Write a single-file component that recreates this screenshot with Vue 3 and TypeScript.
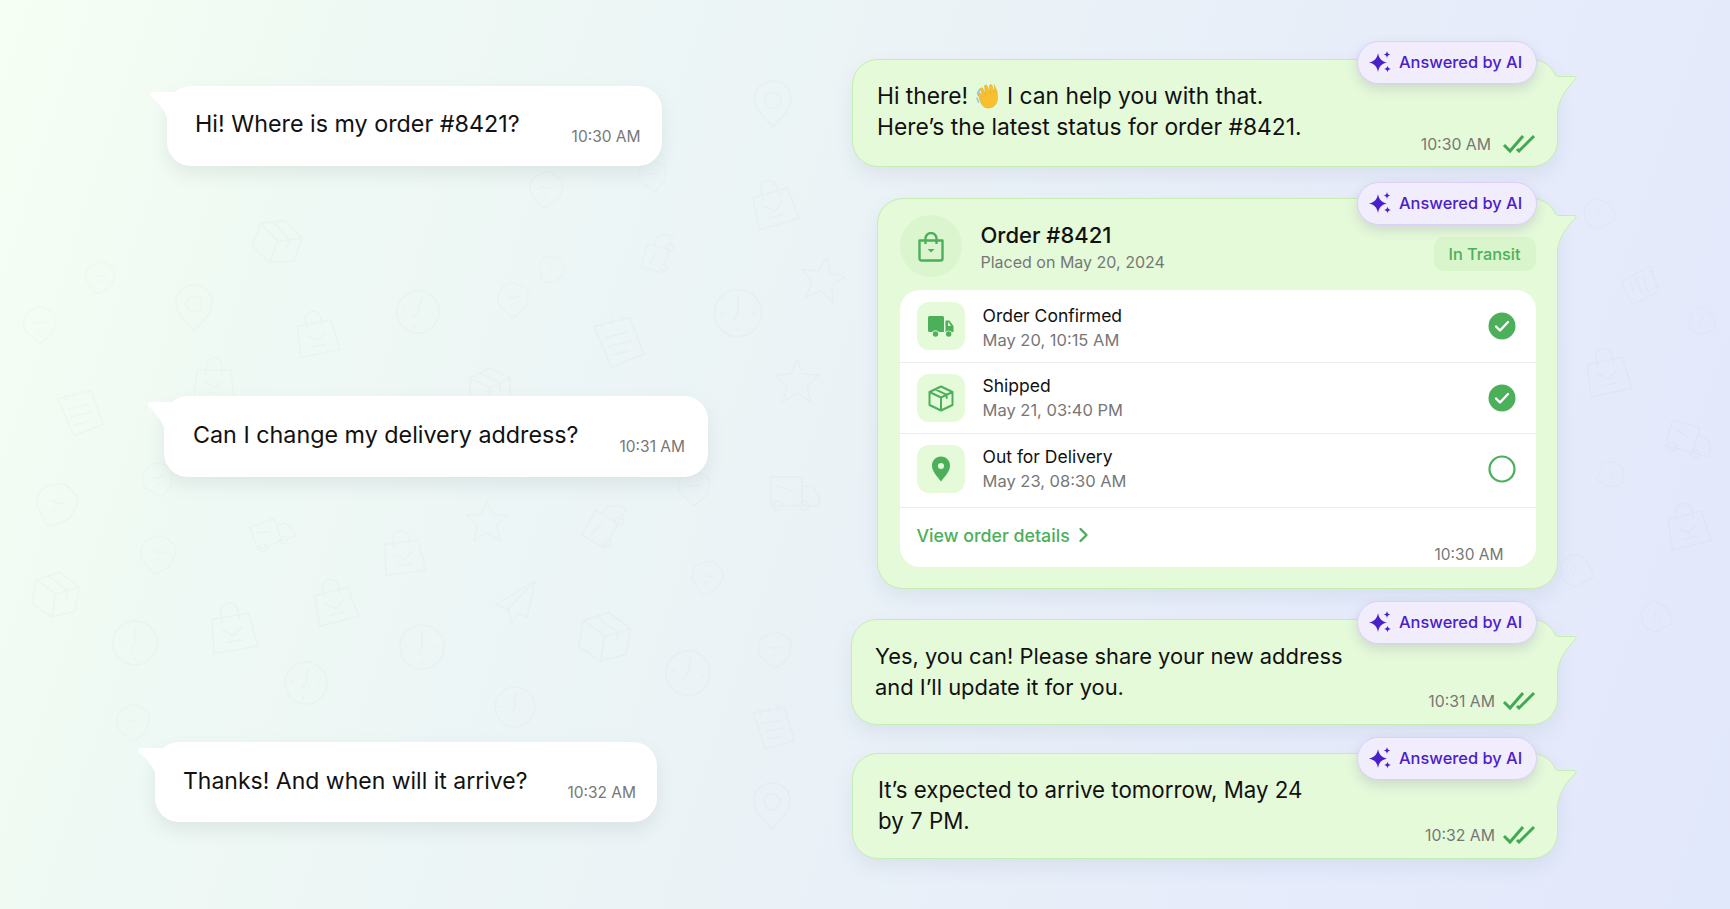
<script setup lang="ts">
type DoodleKind = 'pin' | 'bag' | 'clock' | 'star' | 'box' | 'truck' | 'note' | 'plane' | 'blob';

interface Doodle {
  kind: DoodleKind;
  x: number;
  y: number;
  r: number;
  s: number;
}

// line drawings on a 48x48 grid, centred on 24,24
const shapes: Record<DoodleKind, string> = {
  pin: 'M24 2C13 2 6 10 6 20c0 11 10 19 18 28 8-9 18-17 18-28C42 10 35 2 24 2ZM24 13a8 8 0 1 0 0 16 8 8 0 0 0 0-16Z',
  bag: 'M7 14h34l3 31H4L7 14ZM16 18v-8a8 8 0 0 1 16 0v8M15 25l9 7 9-7M17 37h14',
  clock: 'M24 3a21 21 0 1 0 0 42 21 21 0 0 0 0-42ZM24 9v15l-3 6M24 3V1M9 24h2M37 24h2M24 38v2',
  star: 'M24 3l6 15 16 1-12 11 4 16-14-9-14 9 4-16L2 19l16-1 6-15Z',
  box: 'M4 15 24 5l20 10v22L24 46 4 37V15ZM4 15l20 10 20-10M24 25v21M14 10l20 10v8',
  truck: 'M3 10h27v25H3V10ZM30 18h9l6 9v8H30M13 35a4 4 0 1 0 0 .1M36 35a4 4 0 1 0 0 .1M9 18l12 4',
  note: 'M8 6h32l4 34-30 4L8 6ZM15 4v5M24 3v5M33 3v5M15 18h20M16 26h20M17 34h14',
  plane: 'M44 4 4 28l13 4 4 14 6-10 9 4 8-36ZM17 32 44 4',
  blob: 'M22 4c6-2 10 3 15 5 5 3 6 9 4 14-1 5-1 10-6 13-4 3-7 8-12 8-4-2-6-6-10-9-5-3-8-8-7-14 0-7 4-11 8-13 3-1 5-3 8-4ZM18 22c3-3 5 1 7 0s4-3 6-1M22 30l3-2',
};

const doodles: Doodle[] = [
  { kind: 'pin', x: 773, y: 103, r: 0, s: 1 },
  { kind: 'bag', x: 773, y: 203, r: -16, s: 1.05 },
  { kind: 'star', x: 823, y: 278, r: 10, s: 1 },
  { kind: 'clock', x: 738, y: 313, r: 0, s: 1.12 },
  { kind: 'star', x: 797, y: 380, r: 0, s: 1 },
  { kind: 'truck', x: 795, y: 493, r: 0, s: 1.15 },
  { kind: 'blob', x: 546, y: 190, r: 10, s: 0.9 },
  { kind: 'blob', x: 653, y: 176, r: -8, s: 0.75 },
  { kind: 'box', x: 278, y: 240, r: 20, s: 1.1 },
  { kind: 'blob', x: 100, y: 278, r: 8, s: 0.8 },
  { kind: 'pin', x: 194, y: 307, r: 0, s: 1 },
  { kind: 'bag', x: 316, y: 333, r: -12, s: 1 },
  { kind: 'clock', x: 418, y: 312, r: 15, s: 1 },
  { kind: 'blob', x: 513, y: 300, r: 0, s: 0.85 },
  { kind: 'blob', x: 551, y: 270, r: 30, s: 0.7 },
  { kind: 'truck', x: 658, y: 252, r: -75, s: 0.9 },
  { kind: 'note', x: 617, y: 342, r: -14, s: 1.15 },
  { kind: 'note', x: 79, y: 413, r: -14, s: 1.05 },
  { kind: 'bag', x: 214, y: 380, r: 0, s: 1 },
  { kind: 'blob', x: 40, y: 325, r: 0, s: 0.9 },
  { kind: 'box', x: 490, y: 387, r: 0, s: 1 },
  { kind: 'star', x: 487, y: 520, r: 0, s: 0.95 },
  { kind: 'bag', x: 403, y: 552, r: -8, s: 1 },
  { kind: 'truck', x: 605, y: 523, r: -60, s: 1.05 },
  { kind: 'truck', x: 273, y: 533, r: -20, s: 0.95 },
  { kind: 'blob', x: 158, y: 555, r: 10, s: 0.95 },
  { kind: 'blob', x: 158, y: 480, r: -10, s: 0.85 },
  { kind: 'blob', x: 56, y: 505, r: 20, s: 1.1 },
  { kind: 'blob', x: 694, y: 488, r: 0, s: 0.85 },
  { kind: 'blob', x: 707, y: 578, r: 15, s: 0.85 },
  { kind: 'plane', x: 515, y: 601, r: 0, s: 1 },
  { kind: 'bag', x: 334, y: 601, r: -14, s: 1 },
  { kind: 'bag', x: 232, y: 627, r: -10, s: 1.1 },
  { kind: 'box', x: 56, y: 593, r: 10, s: 1.1 },
  { kind: 'clock', x: 135, y: 643, r: 0, s: 1.05 },
  { kind: 'clock', x: 422, y: 647, r: 0, s: 1.05 },
  { kind: 'box', x: 605, y: 635, r: 10, s: 1.2 },
  { kind: 'clock', x: 688, y: 673, r: 10, s: 1.05 },
  { kind: 'blob', x: 775, y: 650, r: 0, s: 0.9 },
  { kind: 'clock', x: 306, y: 683, r: 10, s: 1 },
  { kind: 'clock', x: 515, y: 707, r: 0, s: 0.95 },
  { kind: 'note', x: 772, y: 728, r: -10, s: 1 },
  { kind: 'pin', x: 772, y: 805, r: 0, s: 1 },
  { kind: 'blob', x: 133, y: 723, r: 0, s: 0.9 },
  { kind: 'blob', x: 1600, y: 214, r: -75, s: 0.8 },
  { kind: 'note', x: 1640, y: 284, r: 70, s: 0.85 },
  { kind: 'blob', x: 1703, y: 322, r: -60, s: 0.7 },
  { kind: 'bag', x: 1607, y: 371, r: -12, s: 1.05 },
  { kind: 'truck', x: 1690, y: 440, r: 15, s: 1.05 },
  { kind: 'blob', x: 1610, y: 475, r: 70, s: 0.7 },
  { kind: 'bag', x: 1687, y: 525, r: -14, s: 1 },
  { kind: 'blob', x: 1577, y: 571, r: -70, s: 0.85 },
  { kind: 'blob', x: 1657, y: 617, r: -70, s: 0.8 },
];

function doodleTransform(d: Doodle): string {
  return `translate(${d.x} ${d.y}) rotate(${d.r}) scale(${d.s}) translate(-24 -24)`;
}

const sparkle =
  'M10 3c1 5.500 3.200 8 9 9.500-5.800 1.500-8 4-9 9.500-1-5.500-3.200-8-9-9.500 5.800-1.500 8-4 9-9.500ZM19 1c.4 2.300 1.200 3.200 3.500 3.600-2.300.4-3.100 1.300-3.500 3.600-.4-2.300-1.200-3.200-3.500-3.600 2.300-.4 3.100-1.300 3.500-3.600ZM19.500 15.500c.4 2.200 1.200 3 3.300 3.400-2.100.4-2.900 1.200-3.300 3.400-.4-2.200-1.200-3-3.300-3.400 2.100-.4 2.900-1.200 3.300-3.400Z';
const tailFill = 'M0 0H20Q23 0 22 3C12 12 6 22 4 34H0Z';
const tailLine = 'M3 .5H20Q23 .5 22 3C12 12 6 22 3.5 34';
const tailIn = 'M3 0H26V36H19C19 24 12 14 1 4Q0 0 3 0Z';
const ticks = 'M2 11l6 6L21 2M15 15l2 2L32 2';

const steps = [
  { title: 'Order Confirmed', when: 'May 20, 10:15 AM', icon: 'truck', done: true },
  { title: 'Shipped', when: 'May 21, 03:40 PM', icon: 'box', done: true },
  { title: 'Out for Delivery', when: 'May 23, 08:30 AM', icon: 'pin', done: false },
];
</script>

<template>
  <div class="page">
    <svg class="doodles" width="1730" height="909" viewBox="0 0 1730 909" fill="none">
      <path v-for="(d, i) in doodles" :key="i" :d="shapes[d.kind]" :transform="doodleTransform(d)" />
    </svg>

    <section class="col col-left">
      <div class="incoming in-one">
        <svg class="tail tail-in" width="26" height="36" viewBox="0 0 26 36"><path :d="tailIn" /></svg>
        <p class="msg">Hi! Where is my order #8421?</p>
        <span class="time">10:30 AM</span>
      </div>
      <div class="incoming in-two">
        <svg class="tail tail-in" width="26" height="36" viewBox="0 0 26 36"><path :d="tailIn" /></svg>
        <p class="msg">Can I change my delivery address?</p>
        <span class="time">10:31 AM</span>
      </div>
      <div class="incoming in-three">
        <svg class="tail tail-in" width="26" height="36" viewBox="0 0 26 36"><path :d="tailIn" /></svg>
        <p class="msg">Thanks! And when will it arrive?</p>
        <span class="time">10:32 AM</span>
      </div>
    </section>

    <section class="col col-right">
      <!-- greeting -->
      <div class="outgoing out-one">
        <svg class="tail tail-out" width="24" height="36" viewBox="0 0 24 36"><path class="tail-fill" :d="tailFill" /><path class="tail-line" :d="tailLine" /></svg>
        <div class="ai-pill">
          <svg width="24" height="24" viewBox="0 0 24 24"><path :d="sparkle" /></svg>
          <span>Answered by AI</span>
        </div>
        <p class="msg">Hi there!
          <svg class="wave" width="26" height="26" viewBox="0 0 26 26" role="img" aria-label="waving hand"><path d="M5 6 2.500 10M2 15l1.500 4M4 9l-1 3" stroke="#8fc7e8" stroke-width="1.600" fill="none" stroke-linecap="round" /><path d="M19 1.500 22 8l.5 7c0 6-4 10-9 10-4 0-6-2-8-6L3.500 12c-.6-1.500 1.300-2.500 2.300-1.200L8 14 5.500 6.500c-.5-1.600 1.600-2.500 2.400-1L11 12 9.500 3.500c-.3-1.700 2-2.200 2.600-.6L15 10.500 14.500 3c0-1.600 2.100-2 2.600-.4l1.900 7 .5-4c.2-2 .1-2.800-.5-4.100Z" fill="#f7c02f" stroke="#e2a21c" stroke-width=".5" /></svg>
          I can help you with that.<br />Here’s the latest status for order #8421.</p>
        <div class="meta">
          <span class="time">10:30 AM</span>
          <svg class="ticks" width="34" height="20" viewBox="0 0 34 20" fill="none"><path :d="ticks" /></svg>
        </div>
      </div>

      <!-- order card -->
      <div class="outgoing card">
        <svg class="tail tail-out" width="24" height="36" viewBox="0 0 24 36"><path class="tail-fill" :d="tailFill" /><path class="tail-line" :d="tailLine" /></svg>
        <div class="ai-pill">
          <svg width="24" height="24" viewBox="0 0 24 24"><path :d="sparkle" /></svg>
          <span>Answered by AI</span>
        </div>
        <header class="card-head">
          <div class="bag-circle">
            <svg width="28" height="30" viewBox="0 0 28 30" fill="none"><path d="M2.500 8.500h23v18a2 2 0 0 1-2 2h-19a2 2 0 0 1-2-2v-18ZM8.500 12V6.500a5.500 5.500 0 0 1 11 0V12" stroke="#4caf5a" stroke-width="2.400" stroke-linejoin="round" /><path d="M10.500 17h7L14 20.500 10.500 17Z" fill="#4caf5a" /></svg>
          </div>
          <div class="card-title">
            <h2>Order #8421</h2>
            <span>Placed on May 20, 2024</span>
          </div>
          <span class="badge">In Transit</span>
        </header>
        <div class="panel">
          <div v-for="s in steps" :key="s.title" class="step">
            <div class="tile">
              <svg v-if="s.icon === 'truck'" class="solid" width="28" height="24" viewBox="0 0 28 24"><path d="M1 3.500A1.500 1.500 0 0 1 2.500 2h13A1.500 1.500 0 0 1 17 3.500V18h-5.200a4 4 0 0 0-6.600 0H2.500A1.500 1.500 0 0 1 1 16.500v-13ZM18.500 6.500h3.800L26.500 12v6h-1.600a4 4 0 0 0-6.400 0V6.500ZM21 8.500v3.500h3l-2.200-3.500H21Z" fill-rule="evenodd" /><circle cx="8.500" cy="20" r="2.700" /><circle cx="21.700" cy="20" r="2.700" /></svg>
              <svg v-else-if="s.icon === 'box'" width="26" height="27" viewBox="0 0 26 27" fill="none"><path d="M13 1.500 24.500 7v13L13 25.500 1.500 20V7L13 1.500ZM1.500 7 13 12.500 24.500 7M13 12.500v13M7.500 4.300l11.200 5.500v4" stroke="#4caf5a" stroke-width="2" stroke-linejoin="round" /></svg>
              <svg v-else class="solid" width="20" height="26" viewBox="0 0 20 26"><path fill-rule="evenodd" d="M10 0.500C4.800.5 1 4.500 1 9.700c0 5.800 5.500 11 9 15.800 3.500-4.800 9-10 9-15.800C19 4.500 15.200.5 10 .5ZM10 7a3 3 0 1 0 0 6 3 3 0 0 0 0-6Z" /></svg>
            </div>
            <div class="step-text">
              <strong>{{ s.title }}</strong>
              <span>{{ s.when }}</span>
            </div>
            <svg v-if="s.done" class="state" width="28" height="28" viewBox="0 0 28 28"><circle cx="14" cy="14" r="13.500" fill="#4caf5a" /><path d="M8 14.500l4 4 8-8.500" fill="none" stroke="#fff" stroke-width="2.400" stroke-linecap="round" stroke-linejoin="round" /></svg>
            <svg v-else class="state" width="28" height="28" viewBox="0 0 28 28"><circle cx="14" cy="14" r="12.500" fill="#fff" stroke="#4caf5a" stroke-width="2.200" /></svg>
          </div>
          <footer class="panel-foot">
            <a class="details">View order details
              <svg width="11" height="16" viewBox="0 0 11 16" fill="none"><path d="M2.500 2l6 6-6 6" stroke="#4caf5a" stroke-width="2.400" stroke-linecap="round" stroke-linejoin="round" /></svg>
            </a>
            <span class="time">10:30 AM</span>
          </footer>
        </div>
      </div>

      <div class="outgoing out-three">
        <svg class="tail tail-out" width="24" height="36" viewBox="0 0 24 36"><path class="tail-fill" :d="tailFill" /><path class="tail-line" :d="tailLine" /></svg>
        <div class="ai-pill">
          <svg width="24" height="24" viewBox="0 0 24 24"><path :d="sparkle" /></svg>
          <span>Answered by AI</span>
        </div>
        <p class="msg">Yes, you can! Please share your new address<br />and I’ll update it for you.</p>
        <div class="meta">
          <span class="time">10:31 AM</span>
          <svg class="ticks" width="34" height="20" viewBox="0 0 34 20" fill="none"><path :d="ticks" /></svg>
        </div>
      </div>

      <div class="outgoing out-four">
        <svg class="tail tail-out" width="24" height="36" viewBox="0 0 24 36"><path class="tail-fill" :d="tailFill" /><path class="tail-line" :d="tailLine" /></svg>
        <div class="ai-pill">
          <svg width="24" height="24" viewBox="0 0 24 24"><path :d="sparkle" /></svg>
          <span>Answered by AI</span>
        </div>
        <p class="msg">It’s expected to arrive tomorrow, May 24<br />by 7 PM.</p>
        <div class="meta">
          <span class="time">10:32 AM</span>
          <svg class="ticks" width="34" height="20" viewBox="0 0 34 20" fill="none"><path :d="ticks" /></svg>
        </div>
      </div>
    </section>
  </div>
</template>

<style scoped>
.page {
  position: relative;
  display: flex;
  width: 1730px;
  height: 909px;
  overflow: hidden;
  font-family: Inter, "Noto Sans", sans-serif;
  color: #111;
  background: linear-gradient(108deg, #f5fff3 0%, #eff9f4 18%, #ebf3f6 45%, #e6ecfa 75%, #e2e8fb 100%);
}

.doodles {
  position: absolute;
  inset: 0;
  stroke: #5c7080;
  stroke-opacity: 0.035;
  stroke-width: 1.4;
  stroke-linejoin: round;
  stroke-linecap: round;
}

.col {
  position: relative;
  display: flex;
  flex-direction: column;
}

.col-left {
  width: 851px;
  padding-top: 86px;
  align-items: flex-start;
}

.col-right {
  width: 707px;
  padding-top: 59px;
  align-items: flex-end;
}

.msg {
  margin: 0;
  font-size: 23.3px;
  line-height: 31px;
}

.time {
  font-size: 15.5px;
  line-height: 18px;
  color: #777;
  white-space: nowrap;
}

.tail {
  position: absolute;
}

/* customer side */
.incoming {
  position: relative;
  display: flex;
  gap: 40px;
  box-sizing: border-box;
  padding: 23px 21px 0 28px;
  background: #fff;
  border-radius: 24px;
  box-shadow: 0 8px 18px rgba(80, 100, 110, 0.11);
}

.incoming .msg {
  white-space: nowrap;
}

.incoming .time {
  padding-top: 19px;
}

.in-one {
  margin-left: 167px;
  height: 80px;
  gap: 52px;
  padding-top: 22px;
}

.in-one .time {
  padding-top: 20px;
}

.in-two {
  margin-top: 230px;
  margin-left: 164px;
  height: 81px;
  padding-left: 29px;
  padding-right: 23px;
  gap: 41px;
}

.in-three {
  margin-top: 265px;
  margin-left: 155px;
  height: 80px;
  padding-top: 24px;
}

.in-three .msg {
  font-size: 23px;
}

.in-three .time {
  padding-top: 18px;
}

.tail-in {
  top: 6px;
  left: -17px;
  fill: #fff;
}

/* assistant side */
.outgoing {
  position: relative;
  display: flex;
  justify-content: space-between;
  align-items: flex-end;
  box-sizing: border-box;
  background: #e5fad9;
  border: 1.5px solid #c6edb3;
  border-radius: 26px;
  box-shadow: 0 8px 18px rgba(90, 110, 150, 0.1);
}

.out-one {
  width: 706px;
  height: 108px;
  padding: 20px 21px 12px 24px;
}

.out-one .msg {
  font-size: 22.8px;
}

.out-three {
  width: 707px;
  height: 106px;
  margin-top: 30px;
  padding: 21px 21px 13px 23px;
}

.out-three .msg {
  font-size: 21.9px;
}

.out-four {
  width: 706px;
  height: 106px;
  margin-top: 28px;
  padding: 20px 21px 13px 25px;
}

.out-four .msg {
  font-size: 22.3px;
}

.out-three .meta,
.out-four .meta {
  gap: 7px;
}

.outgoing .msg {
  align-self: flex-start;
}

.wave {
  vertical-align: -5px;
}

.tail-out {
  top: 15.500px;
  right: -21px;
}

.tail-fill {
  fill: #e5fad9;
}

.tail-line {
  fill: none;
  stroke: #c6edb3;
  stroke-width: 1;
}

.ai-pill {
  position: absolute;
  top: -19.500px;
  right: 20px;
  display: flex;
  align-items: center;
  gap: 7px;
  box-sizing: border-box;
  width: 180px;
  height: 43px;
  padding-left: 10px;
  background: #f2edfd;
  border: 1.5px solid #dccffa;
  border-radius: 22px;
  box-shadow: 0 5px 12px rgba(90, 80, 150, 0.18);
  font-size: 16.400px;
  font-weight: 500;
  color: #4a20c8;
  white-space: nowrap;
}

.card .ai-pill,
.out-four .ai-pill {
  top: -17.500px;
}

.ai-pill svg {
  fill: #4a20c8;
  flex: none;
}

.meta {
  display: flex;
  align-items: center;
  gap: 11px;
}

.meta .time {
  padding-top: 2px;
  font-size: 15.800px;
}

.ticks {
  stroke: #43a854;
  stroke-width: 3;
}

/* order card */
.card {
  display: block;
  width: 681px;
  height: 391px;
  margin-top: 31px;
  padding: 16px 21.500px 0;
}

.card-head {
  display: flex;
  align-items: flex-start;
  height: 75px;
}

.bag-circle {
  display: flex;
  align-items: center;
  justify-content: center;
  box-sizing: border-box;
  width: 62px;
  height: 62px;
  padding-top: 2px;
  border-radius: 50%;
  background: #dbf6ce;
}

.card-title {
  display: flex;
  flex-direction: column;
  margin-left: 19px;
  padding-top: 6px;
}

.card-title h2 {
  margin: 0;
  font-size: 22px;
  line-height: 28px;
  font-weight: 500;
}

.card-title span {
  margin-top: 3px;
  font-size: 16px;
  line-height: 20px;
  color: #777;
}

.badge {
  margin-left: auto;
  margin-top: 22px;
  padding: 0 15px;
  height: 34px;
  line-height: 34px;
  border-radius: 10px;
  background: #d8f5cb;
  color: #4caf5a;
  font-size: 16.300px;
  font-weight: 500;
}

.panel {
  background: #fff;
  border-radius: 20px;
  overflow: hidden;
}

.step {
  display: flex;
  align-items: center;
  box-sizing: border-box;
  height: 73px;
  padding: 0 20px 0 17px;
  border-bottom: 1.500px solid #ececec;
}

.step:nth-child(2) {
  height: 71px;
}

.step:nth-child(3) {
  height: 74px;
  padding-bottom: 4px;
}

.step:nth-child(1) .step-text {
  padding-top: 3px;
}

.tile {
  display: flex;
  align-items: center;
  justify-content: center;
  width: 48px;
  height: 48px;
  border-radius: 12px;
  background: #e5fad9;
}

.tile .solid {
  fill: #4caf5a;
}

.step-text {
  display: flex;
  flex-direction: column;
  margin-left: 18px;
}

.step-text strong {
  font-size: 17.500px;
  line-height: 24px;
  font-weight: 400;
}

.step-text span {
  font-size: 16.500px;
  line-height: 24px;
  color: #777;
}

.state {
  margin-left: auto;
}

.panel-foot {
  display: flex;
  justify-content: space-between;
  height: 59px;
  padding: 15px 32px 0 17px;
  box-sizing: border-box;
}

.details {
  display: flex;
  align-items: center;
  gap: 8px;
  height: 24px;
  font-size: 17.800px;
  font-weight: 500;
  color: #4caf5a;
}

.panel-foot .time {
  padding-top: 23px;
}
</style>

<style>
html,
body {
  margin: 0;
  background: #e9f1f8;
}
</style>
